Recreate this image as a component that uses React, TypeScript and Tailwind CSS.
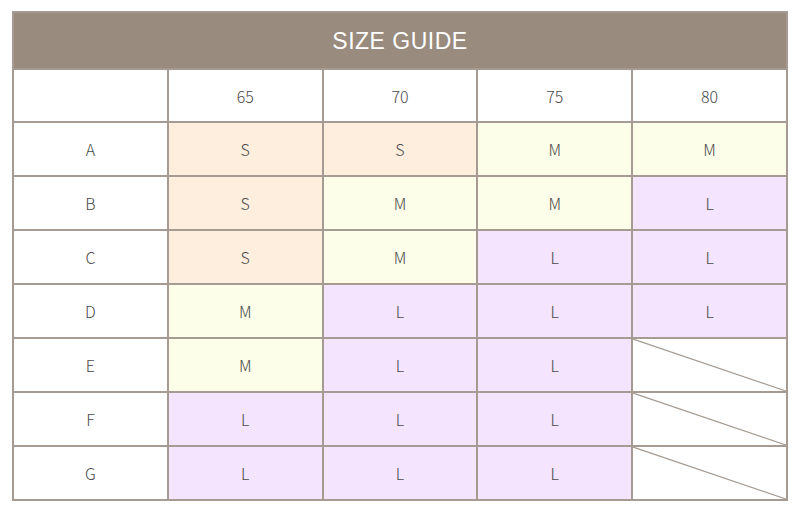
const cols = ["65", "70", "75", "80"];

type Tone = "s" | "m" | "l" | "none";

const rows: { label: string; cells: Tone[] }[] = [
  { label: "A", cells: ["s", "s", "m", "m"] },
  { label: "B", cells: ["s", "m", "m", "l"] },
  { label: "C", cells: ["s", "m", "l", "l"] },
  { label: "D", cells: ["m", "l", "l", "l"] },
  { label: "E", cells: ["m", "l", "l", "none"] },
  { label: "F", cells: ["l", "l", "l", "none"] },
  { label: "G", cells: ["l", "l", "l", "none"] },
];

const toneClass: Record<Tone, string> = {
  s: "bg-[#fdeedd]",
  m: "bg-[#fdfee9]",
  l: "bg-[#f4e4fd]",
  none: "bg-white",
};

const toneText: Record<Tone, string> = { s: "S", m: "M", l: "L", none: "" };

function Cell({ children, className = "" }: { children?: React.ReactNode; className?: string }) {
  return (
    <div
      className={`relative flex items-center justify-center text-[16px] font-light text-[#4a4a4a] ${className}`}
    >
      {children}
    </div>
  );
}

function Slash() {
  return (
    <svg
      className="absolute inset-0 h-full w-full"
      viewBox="0 0 100 100"
      preserveAspectRatio="none"
    >
      <line x1="0" y1="0" x2="100" y2="100" stroke="#a59b92" strokeWidth="1.2" vectorEffect="non-scaling-stroke" />
    </svg>
  );
}

export default function App() {
  return (
    <div className="min-h-[517px] bg-white pl-[12px] pt-[11px] [font-family:'Noto_Sans_CJK_JP','Noto_Sans',sans-serif]">
      <div className="w-[776px] border-2 border-[#a59b92]">
        <div className="flex h-[55px] items-center justify-center bg-[#998b7e] pt-[2px] text-[23px] tracking-[0.5px] text-white [font-family:'Liberation_Sans',Arial,sans-serif]">
          SIZE GUIDE
        </div>
        <div className="grid grid-cols-5 grid-rows-[51px_repeat(7,52px)] gap-[2px] bg-[#a59b92] pt-[2px]">
          <Cell className="bg-white" />
          {cols.map((c) => (
            <Cell key={c} className="bg-white">
              {c}
            </Cell>
          ))}
          {rows.map((r) => (
            <div key={r.label} className="contents">
              <Cell className="bg-white">{r.label}</Cell>
              {r.cells.map((t, i) => (
                <Cell key={i} className={toneClass[t]}>
                  {t === "none" ? <Slash /> : toneText[t]}
                </Cell>
              ))}
            </div>
          ))}
        </div>
      </div>
    </div>
  );
}
